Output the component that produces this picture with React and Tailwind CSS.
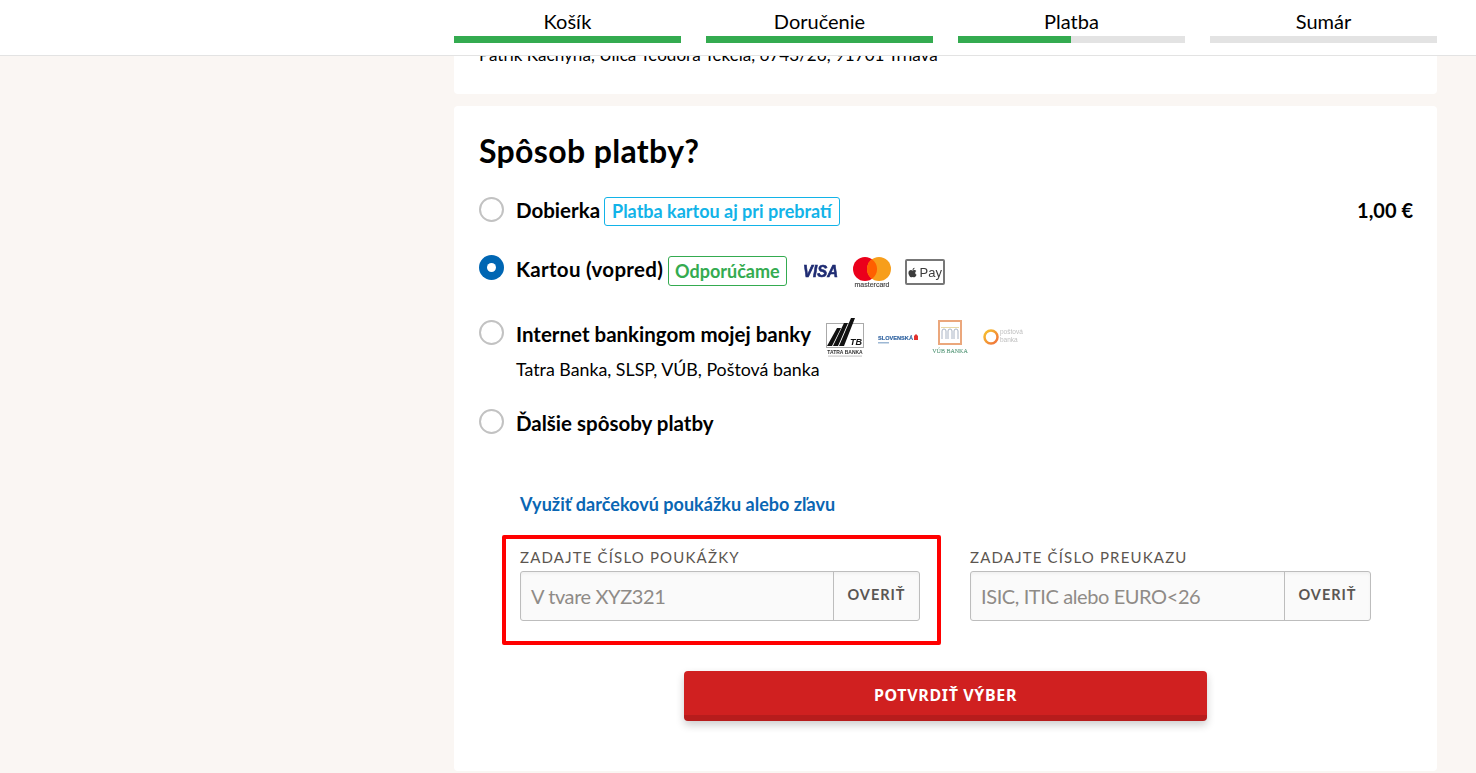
import React from "react";
import { FaApple } from "react-icons/fa";

const steps = [
  { label: "Košík", pct: "100%" },
  { label: "Doručenie", pct: "100%" },
  { label: "Platba", pct: "49.8%" },
  { label: "Sumár", pct: "0%" },
];

function Radio({ checked }) {
  return checked ? (
    <span className="w-[25px] h-[25px] rounded-full bg-[#0066b3] shrink-0 flex items-center justify-center">
      <span className="w-[9px] h-[9px] rounded-full bg-white" />
    </span>
  ) : (
    <span className="w-[25px] h-[25px] rounded-full border-2 border-[#c2c2c2] bg-white shrink-0" />
  );
}

function Visa() {
  return (
    <svg width="38" height="20" viewBox="0 0 38 20" className="blur-[0.3px]">
      <text x="1" y="16" fontFamily="Liberation Sans" fontStyle="italic" fontWeight="700" fontSize="16" textLength="35" lengthAdjust="spacingAndGlyphs" fill="#1f2c73" stroke="#1f2c73" strokeWidth="0.6">VISA</text>
    </svg>
  );
}

function Mastercard() {
  return (
    <svg width="38" height="32" viewBox="0 0 38 32" className="blur-[0.3px]">
      <circle cx="12" cy="12" r="12" fill="#eb001b" />
      <circle cx="26" cy="12" r="12" fill="#f79e1b" />
      <path d="M19 2.2a12 12 0 0 1 0 19.6a12 12 0 0 1 0-19.6z" fill="#ff5f00" />
      <text x="19" y="30" textAnchor="middle" fontFamily="Liberation Sans" fontSize="7" textLength="35" lengthAdjust="spacingAndGlyphs" fill="#444" stroke="#444" strokeWidth="0.15">mastercard</text>
    </svg>
  );
}

function ApplePay() {
  return (
    <span className="w-[40px] h-[26px] rounded-[2px] border-2 border-[#777] flex items-center justify-center gap-[1px] text-[#3c3c3c] blur-[0.3px]">
      <FaApple className="w-[11px] h-[11px]" />
      <span className="text-[13px] leading-none font-['Liberation_Sans']">Pay</span>
    </span>
  );
}

function Tatra() {
  return (
    <svg width="38" height="40" viewBox="0 0 38 40" className="blur-[0.4px]">
      <rect x="0.5" y="5.5" width="37" height="24" fill="#fff" stroke="#aaa" />
      <path d="M1 28 L11 10 L15 10 L6 28z M7 28 L18 5 L22 5 L12 28z M13 28 L25 0 L29 0 L18 28z" fill="#111" />
      <text x="24" y="27" fontFamily="Liberation Sans" fontStyle="italic" fontWeight="700" fontSize="9" fill="#111">TB</text>
      <text x="19" y="35.5" textAnchor="middle" fontFamily="Liberation Sans" fontWeight="700" fontSize="5" fill="#333">TATRA BANKA</text>
      <rect x="2" y="37.5" width="34" height="1.2" fill="#ccc" />
    </svg>
  );
}

function Slsp() {
  return (
    <svg width="40" height="12" viewBox="0 0 40 12" className="blur-[0.4px]">
      <text x="0" y="7" fontFamily="Liberation Sans" fontWeight="700" fontSize="6" textLength="35" lengthAdjust="spacingAndGlyphs" fill="#2b5f9e" stroke="#2b5f9e" strokeWidth="0.15">SLOVENSKÁ</text>
      <path d="M36 7 L36 3 L38 1 L40 3 L40 7z" fill="#e2312d" />
      <rect x="0" y="9" width="11" height="1.5" fill="#9db8d4" />
    </svg>
  );
}

function Vub() {
  return (
    <svg width="38" height="34" viewBox="0 0 38 34" className="blur-[0.4px]">
      <rect x="8" y="1" width="22" height="23" fill="#fff" stroke="#eba77c" strokeWidth="2" />
      <path d="M11 19V11a2 2 0 0 1 4 0V19 M17 19V11a2 2 0 0 1 4 0V19 M23 19V11a2 2 0 0 1 4 0V19" fill="none" stroke="#a9b4c4" strokeWidth="1" />
      <rect x="10" y="7" width="18" height="1" fill="#e8d9a8" />
      <text x="19" y="32.5" textAnchor="middle" fontFamily="Liberation Serif" fontSize="6" fill="#5a9a7c" stroke="#5a9a7c" strokeWidth="0.1">VÚB BANKA</text>
    </svg>
  );
}

function Postova() {
  return (
    <svg width="44" height="20" viewBox="0 0 44 20" className="blur-[0.4px]">
      <defs>
        <linearGradient id="pb" x1="0" y1="0" x2="1" y2="1">
          <stop offset="0" stopColor="#f7c32e" />
          <stop offset="1" stopColor="#f0703c" />
        </linearGradient>
      </defs>
      <circle cx="8" cy="10" r="6.5" fill="none" stroke="url(#pb)" strokeWidth="2.5" />
      <text x="17" y="7" fontFamily="Liberation Sans" fontSize="6.5" fill="#c0c0c0">poštová</text>
      <text x="17" y="15" fontFamily="Liberation Sans" fontSize="6.5" fill="#c0c0c0">banka</text>
    </svg>
  );
}

function Voucher({ label, placeholder }) {
  return (
    <div className="flex flex-col">
      <div className="text-[15px] leading-[20px] tracking-[1.17px] text-[#5c5650] mb-[4px]">{label}</div>
      <div className="flex h-[50px] rounded-[3px] border border-[#bdbdbd] bg-[#fafafa] shadow-[inset_0_2px_3px_rgba(0,0,0,0.04)]">
        <div className="flex-1 pl-[10px] flex items-center text-[20px] tracking-[-0.4px] text-[#8f8b87]">{placeholder}</div>
        <div className="w-[86px] border-l border-[#bdbdbd] flex items-center justify-center text-[14.5px] font-bold tracking-[1px] text-[#5a5653] pb-[2px]">OVERIŤ</div>
      </div>
    </div>
  );
}

export default function App() {
  return (
    <div className="relative h-[773px] overflow-hidden bg-[#faf6f3] font-['Lato',sans-serif] text-black">
      <header className="absolute top-0 left-0 right-0 h-[56px] bg-white border-b border-[#e3e3e3] pl-[454px] z-10">
        <div className="w-[983px] grid grid-cols-4 gap-[25px]">
          {steps.map((s) => (
            <div key={s.label} className="flex flex-col items-center">
              <div className="h-[36px] pt-[6px] text-[20px] leading-[30px]">{s.label}</div>
              <div className="w-full h-[7px] bg-[#e3e3e3]">
                <div className="h-full bg-[#34ab50]" style={{ width: s.pct }} />
              </div>
            </div>
          ))}
        </div>
      </header>

      <main className="ml-[454px] w-[983px] flex flex-col gap-[12px]">
        <section className="h-[94px] bg-white rounded-b-[4px] pl-[25px] pt-[43px] text-[17.08px] leading-[24px]">
          Patrik Kachyna, Ulica Teodora Tekela, 6743/26, 91701 Trnava
        </section>

        <section className="h-[665px] bg-white rounded-[4px] pl-[25px] pr-[24px] pt-[24px]">
          <h1 className="text-[32px] leading-[42px] font-bold tracking-[0.35px]">Spôsob platby?</h1>

          <div className="mt-[25px] flex items-start gap-[12px] h-[29px]">
            <Radio />
            <span className="text-[20.5px] leading-[27px] font-bold">Dobierka</span>
            <span className="-ml-[8px] h-[29px] px-[7px] border border-[#12b3e8] rounded-[3px] text-[#12b3e8] text-[18px] font-bold leading-[27px]">Platba kartou aj pri prebratí</span>
            <span className="ml-auto text-[20px] leading-[27px] font-bold">1,00 €</span>
          </div>

          <div className="mt-[29px] flex items-start gap-[12px] h-[31px]">
            <Radio checked />
            <span className="text-[20.5px] leading-[28px] font-bold tracking-[0.3px]">Kartou (vopred)</span>
            <span className="-ml-[7px] mt-[1px] h-[30px] px-[6px] border border-[#34ab50] rounded-[3px] text-[#34ab50] text-[18px] font-bold leading-[28px]">Odporúčame</span>
            <span className="ml-[3px] mt-[6px]"><Visa /></span>
            <span className="mt-[2px] ml-[1px]"><Mastercard /></span>
            <span className="mt-[4px] ml-[2px]"><ApplePay /></span>
          </div>

          <div className="mt-[34px] flex items-start gap-[12px]">
            <Radio />
            <div className="flex flex-col">
              <div className="flex items-start">
                <span className="text-[20.5px] leading-[28px] font-bold">Internet bankingom mojej banky</span>
                <span className="ml-[15px] -mt-[2px]"><Tatra /></span>
                <span className="ml-[14px] mt-[13px]"><Slsp /></span>
                <span className="ml-[13px]"><Vub /></span>
                <span className="ml-[14px] mt-[7px]"><Postova /></span>
              </div>
              <div className="-mt-[1px] text-[17.8px] leading-[24px]">Tatra Banka, SLSP, VÚB, Poštová banka</div>
            </div>
          </div>

          <div className="mt-[28px] flex items-start gap-[12px]">
            <Radio />
            <span className="text-[20.5px] leading-[28px] font-bold">Ďalšie spôsoby platby</span>
          </div>

          <div className="mt-[55px] pl-[41px] text-[#0a66b3] text-[18px] leading-[24px] font-bold tracking-[0.03px]">Využiť darčekovú poukážku alebo zľavu</div>

          <div className="mt-[19px] pl-[23px] flex items-start">
            <div className="w-[439px] h-[110px] border-[4px] border-[#ff0000] rounded-[2px] pl-[14px] pr-[17px] pt-[8px]">
              <Voucher label="ZADAJTE ČÍSLO POUKÁŽKY" placeholder="V tvare XYZ321" />
            </div>
            <div className="ml-[29px] w-[401px] pt-[12px]">
              <Voucher label="ZADAJTE ČÍSLO PREUKAZU" placeholder="ISIC, ITIC alebo EURO<26" />
            </div>
          </div>

          <div className="mt-[26px] -ml-[25px] -mr-[24px] flex justify-center">
            <button className="w-[523px] h-[50px] pt-[4px] rounded-[4px] bg-[#d02020] border-b-[6px] border-[#b71c1c] text-white text-[16px] font-bold tracking-[0.65px] font-['Noto_Sans',sans-serif] shadow-[0_4px_8px_rgba(0,0,0,0.2)]">
              POTVRDIŤ VÝBER
            </button>
          </div>
        </section>
      </main>
    </div>
  );
}
